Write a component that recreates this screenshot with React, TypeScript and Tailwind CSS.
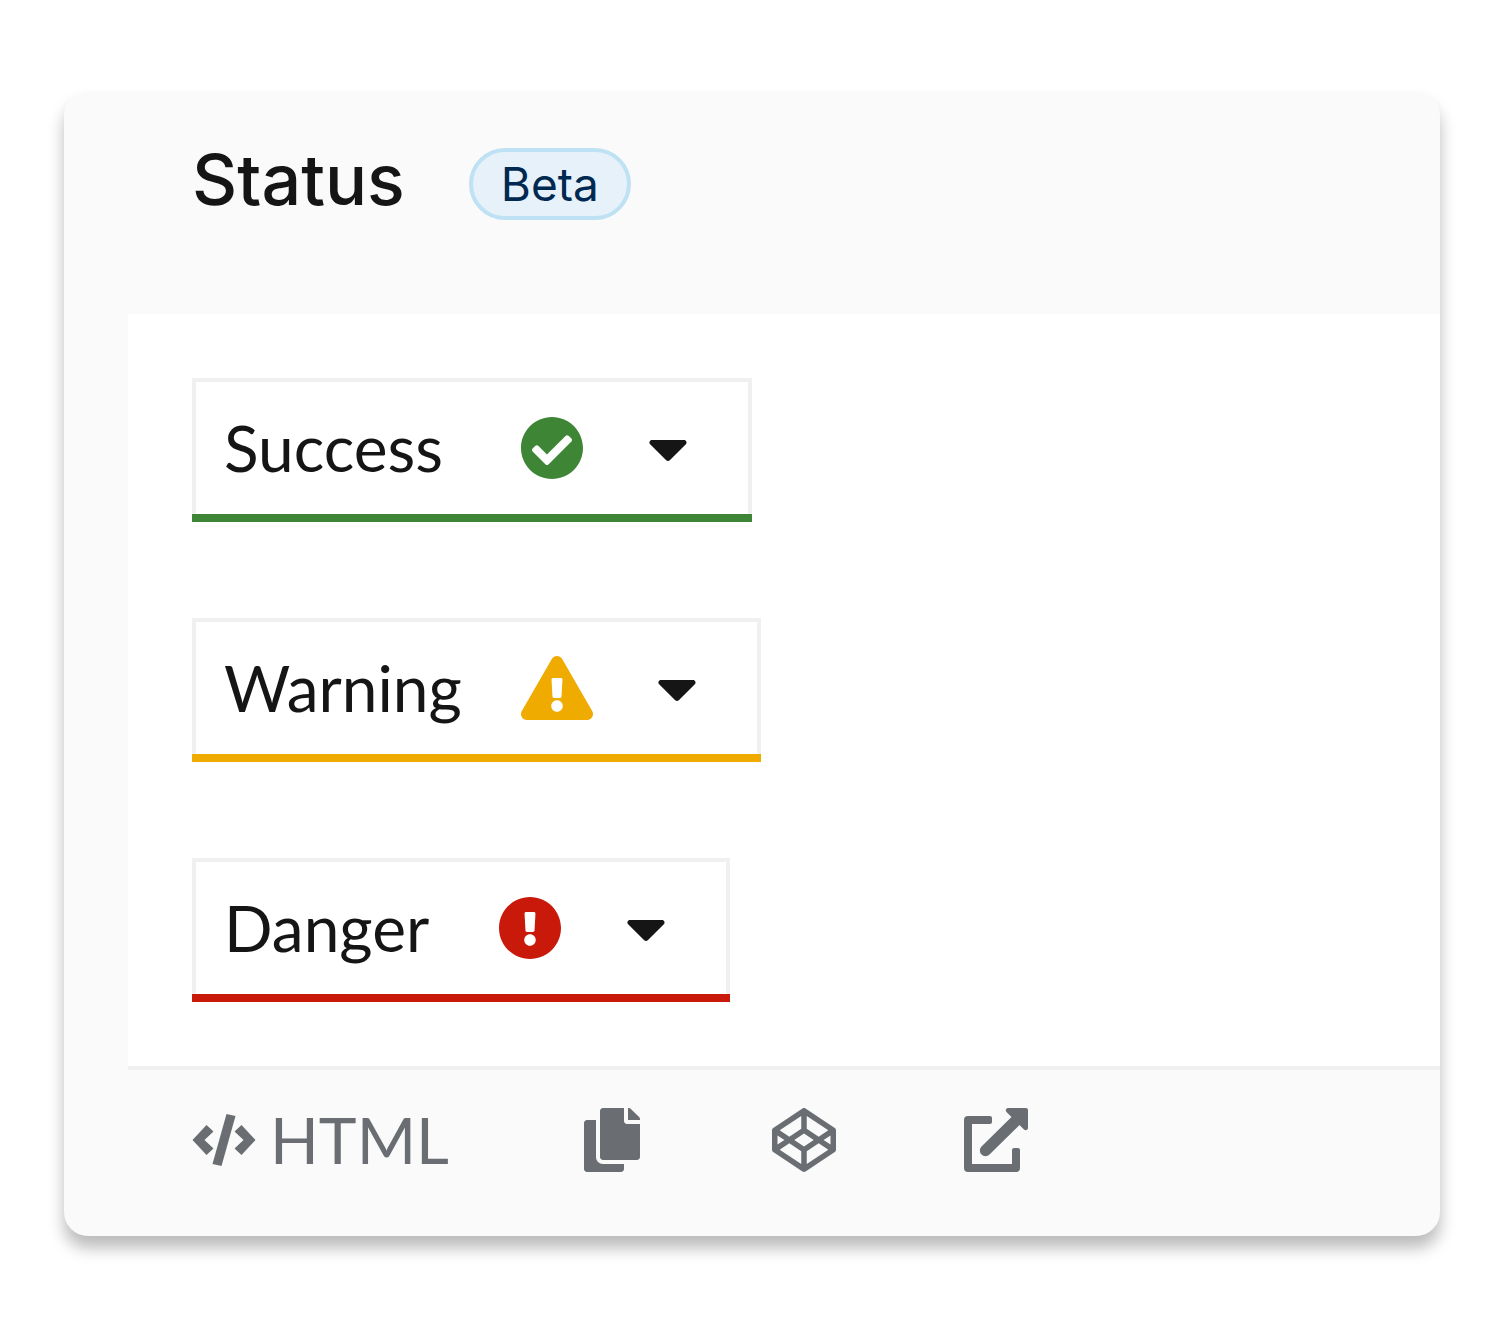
import React from 'react';
import {
  FaCaretDown,
  FaCheckCircle,
  FaCodepen,
  FaCopy,
  FaExclamationCircle,
  FaExclamationTriangle,
} from 'react-icons/fa';

function CodeIcon() {
  return (
    <svg viewBox="0 0 64 52" className="h-[52px] w-16 shrink-0" fill="currentColor" aria-hidden="true">
      <path d="M0.500 26 14.500 11 21.500 17.500 12.500 26 21.500 34.500 14.500 41Z" />
      <path d="M63.500 26 49.500 11 42.500 17.500 51.500 26 42.500 34.500 49.500 41Z" />
      <path d="M34.500 0 43.500 2 29.500 52 20.500 50Z" />
    </svg>
  );
}

function ExternalLinkIcon() {
  return (
    <svg viewBox="0 0 64 64" className="size-16" fill="currentColor" aria-hidden="true">
      <path d="M4 8H26Q28 8 28 10V14Q28 16 26 16H8V56H48V42Q48 40 50 40H54Q56 40 56 42V60Q56 64 52 64H4Q0 64 0 60V12Q0 8 4 8Z" />
      <path d="M44 0H62Q64 0 64 2V20C64 22 61.500 23 60 21.500L55.500 17 25.500 46.500A5.500 5.500 0 0 1 17.500 38.500L47.500 9 42.500 4C41 2.500 42 0 44 0Z" />
    </svg>
  );
}

type StatusToggleProps = {
  label: string;
  labelWidth: string;
  bar: string;
  icon: React.ReactNode;
};

function StatusToggle({ label, labelWidth, bar, icon }: StatusToggleProps) {
  return (
    <button type="button" aria-haspopup="menu" className="flex flex-col bg-white text-[#151515]">
      <span className="flex items-center gap-16 border-4 border-b-0 border-[#f0f0f0] py-4.5 pr-15 pl-7">
        <span className={`text-left text-[64px] leading-24 whitespace-nowrap ${labelWidth}`}>{label}</span>
        {icon}
        <FaCaretDown className="h-16 w-10" aria-hidden="true" />
      </span>
      <span className={`h-2 w-full ${bar}`} />
    </button>
  );
}

export default function App() {
  return (
    <div className="min-h-screen bg-white px-16 py-23 font-['Lato',sans-serif]">
      <main className="overflow-hidden rounded-3xl bg-[#fafafa] shadow-[0_12px_16px_rgba(3,3,3,0.27)]">
        <header className="flex items-start gap-16 px-32 pt-14 pb-23.5 font-['Inter',sans-serif]">
          <h1 className="text-[70px] leading-16 font-medium text-[#151515]">Status</h1>
          <span className="rounded-full border-4 border-[#bee1f4] bg-[#e7f1fa] px-7 text-[46px] leading-16 text-[#002952]">
            Beta
          </span>
        </header>

        <section className="ml-16 flex flex-col items-start gap-24 border-b-4 border-[#f0f0f0] bg-white p-16">
          <StatusToggle
            label="Success"
            labelWidth="w-[232px]"
            bar="bg-[#3e8635]"
            icon={<FaCheckCircle className="size-16 text-[#3e8635]" aria-hidden="true" />}
          />
          <StatusToggle
            label="Warning"
            labelWidth="w-[233px]"
            bar="bg-[#f0ab00]"
            icon={<FaExclamationTriangle className="h-16 w-18 text-[#f0ab00]" aria-hidden="true" />}
          />
          <StatusToggle
            label="Danger"
            labelWidth="w-[210px]"
            bar="bg-[#c9190b]"
            icon={<FaExclamationCircle className="size-16 text-[#c9190b]" aria-hidden="true" />}
          />
        </section>

        <footer className="ml-16 flex items-center pt-5.5 pb-12 text-[#6a6e73]">
          <button type="button" className="flex w-[388px] items-center gap-3.5 pl-16 text-[64px] leading-24">
            <CodeIcon />
            HTML
          </button>
          <button type="button" aria-label="Copy code" className="flex w-48 justify-center">
            <FaCopy className="h-16 w-14" />
          </button>
          <button type="button" aria-label="Open in CodePen" className="flex w-48 justify-center">
            <FaCodepen className="size-16" />
          </button>
          <a href="#fullscreen" aria-label="Open in new window" className="flex w-48 justify-center">
            <ExternalLinkIcon />
          </a>
        </footer>
      </main>
    </div>
  );
}
